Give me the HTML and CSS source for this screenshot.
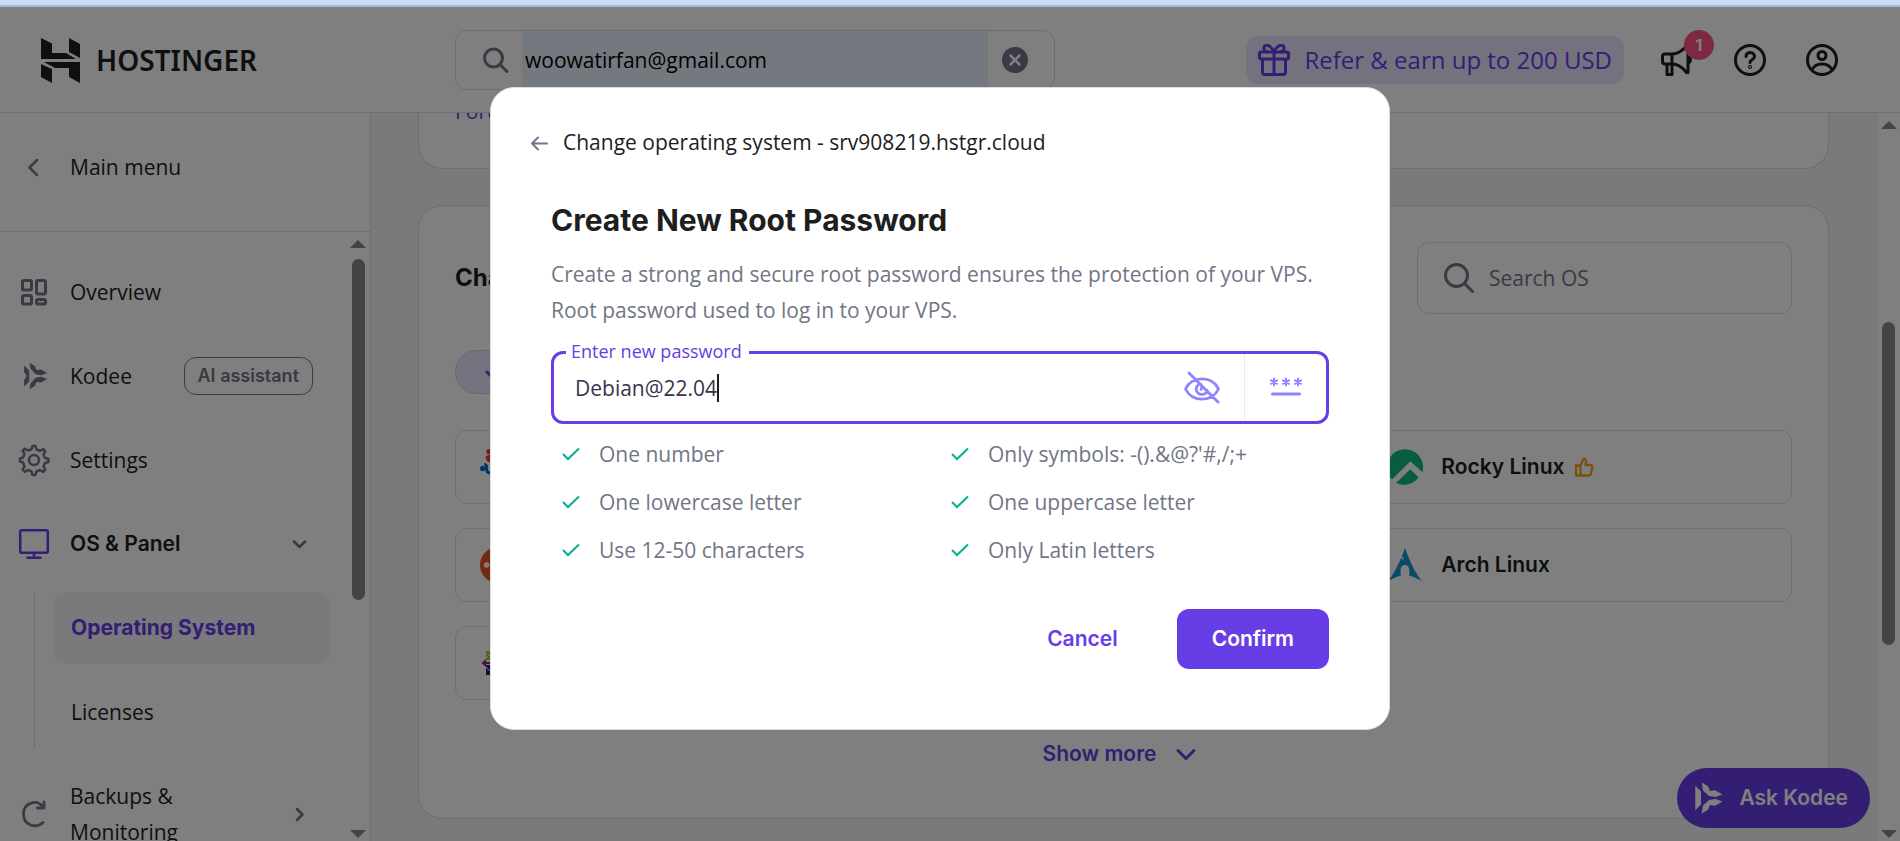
FILE: index.html
```html
<!DOCTYPE html>
<html lang="en">
<head>
<meta charset="utf-8">
<meta name="viewport" content="width=device-width, initial-scale=1">
<title>Operating System</title>
<link rel="stylesheet" href="styles.css">
</head>
<body>
<div class="strip"></div>
<div class="app">
  <header class="topbar">
    <a class="brand" href="#">
      <svg class="brand-mark" viewBox="0 0 39 45" fill="#1d1e20"><path d="M0 0l11 5.500V15h14l10 6H0zM28 0l11 6v14l-11-6zM3 24h36v21l-11-6v-9H14zM0 26l11 5v14L0 39z"/></svg>
      <span>HOSTINGER</span>
    </a>
    <div class="search">
      <svg class="i26" viewBox="0 0 26 26" fill="none" stroke="#727586" stroke-width="3" stroke-linecap="round"><circle cx="10.500" cy="11" r="9"/><path d="M17 17.500l7 7"/></svg>
      <input class="search-input" type="text" aria-label="Search" value="woowatirfan@gmail.com">
      <button class="plain" type="button" aria-label="Clear">
        <svg class="i26" viewBox="0 0 26 26"><circle cx="13" cy="13" r="13" fill="#727586"/><path d="M8.500 8.500l9 9M17.500 8.500l-9 9" stroke="#fff" stroke-width="2.500" stroke-linecap="round"/></svg>
      </button>
    </div>
    <div class="tools">
      <a class="refer" href="#">
        <svg class="i32" viewBox="0 0 32 32" fill="none" stroke="#673de6" stroke-width="3" stroke-linejoin="round"><rect x="1.500" y="8" width="29" height="7" rx="1.500"/><path d="M4.500 15v13q0 2.500 2.500 2.500h18q2.500 0 2.500-2.500V15M16 8v22M16 8C12-1 5 0 6 5q.5 3 4 3M16 8c4-9 11-8 10-3q-.5 3-4 3"/></svg>
        <span>Refer &amp; earn up to 200 USD</span>
      </a>
      <button class="plain bell" type="button" aria-label="News">
        <svg class="i36" viewBox="0 0 36 36" fill="none" stroke="#1d1e20" stroke-width="3" stroke-linejoin="round"><path d="M12 12H5q-2.500 0-2.500 2.500v5q0 2.500 2.500 2.500h7c6 0 11 4 14.500 8.500h1.500V4h-1.500C23 8 18 12 12 12zM12 12v10M7 22v10.500h5V22M28.500 14q4 3.500 0 7.500"/></svg>
        <span class="count">1</span>
      </button>
      <button class="plain" type="button" aria-label="Help">
        <svg class="i36" viewBox="0 0 36 36" fill="none" stroke="#1d1e20" stroke-width="3" stroke-linecap="round"><circle cx="18" cy="18" r="14.500"/><path d="M14 14.500c0-5.500 8.500-5 8.500 0 0 3.500-4.500 3-4.500 6"/><circle cx="18" cy="25" r=".6"/></svg>
      </button>
      <button class="plain" type="button" aria-label="Account">
        <svg class="i36" viewBox="0 0 36 36" fill="none" stroke="#1d1e20" stroke-width="3"><circle cx="18" cy="18" r="14.500"/><circle cx="18" cy="13.500" r="4"/><path d="M8 28c3.500-8 16.500-8 20 0"/></svg>
      </button>
    </div>
  </header>

  <div class="body">
    <aside class="sidebar">
      <a class="back" href="#">
        <svg class="i36" viewBox="0 0 36 36" fill="none" stroke="#727586" stroke-width="2.500" stroke-linecap="round" stroke-linejoin="round"><path d="M21 11l-7.500 7.500L21 26"/></svg>
        <span>Main menu</span>
      </a>
      <div class="nav-wrap">
        <nav class="nav">
          <a class="item" href="#">
            <svg class="i36" viewBox="0 0 36 36" fill="none" stroke="#727586" stroke-width="3"><rect x="6.500" y="6.500" width="9" height="9.500" rx="1.500"/><rect x="20.500" y="6.500" width="9" height="13.500" rx="1.500"/><rect x="6.500" y="21.500" width="9" height="8.500" rx="1.500"/><rect x="20.500" y="25.500" width="9" height="4.500" rx="1.500"/></svg>
            <span>Overview</span>
          </a>
          <a class="item" href="#">
            <svg class="i36" viewBox="-9 -5 42 42" fill="#727586"><path d="M.3 3.700l6.200 6V22.300l-6.200 6V21l3-5-3-5zM6.700.5L13 4.300l2 4.700 5-.7 7.500 4.200-7 2.500-6.500-1-6-6.500zM6.700 31.500l6.300-3.800 2-4.700 5 .7 7.500-4.200-7-2.500-6.500 1-6 6.500z"/></svg>
            <span>Kodee</span>
            <span class="tag">AI assistant</span>
          </a>
          <a class="item" href="#">
            <svg class="i36" viewBox="0 0 36 36" fill="none" stroke="#727586" stroke-width="2.500" stroke-linejoin="round"><circle cx="18" cy="18" r="5"/><path d="M15.500 7.500L16.500 4h3l1 3.500 3.500 1.500 3.200-1.800 2.100 2.100-1.800 3.200 1.500 3.500 3.500 1v3l-3.500 1-1.500 3.500 1.800 3.200-2.100 2.100-3.200-1.800-3.500 1.500-1 3.500h-3l-1-3.500-3.500-1.500-3.200 1.800-2.100-2.100 1.800-3.200L7 20.500l-3-1v-3l3-1L8.500 12 6.700 8.800l2.100-2.100L12 8.500z"/></svg>
            <span>Settings</span>
          </a>
          <a class="item open" href="#">
            <svg class="i36" viewBox="0 0 36 36" fill="none" stroke="#673de6" stroke-width="2.500" stroke-linecap="round"><rect x="4.200" y="4.200" width="27.600" height="22.600" rx="1.500"/><path d="M18 27v4.500M11.500 31.700h13"/></svg>
            <span>OS &amp; Panel</span>
            <svg class="i28 end" viewBox="0 0 28 28" fill="none" stroke="#727586" stroke-width="2.500" stroke-linecap="round" stroke-linejoin="round"><path d="M9 11.500l5.500 5.500 5.500-5.500"/></svg>
          </a>
          <div class="sub">
            <a class="subitem active" href="#">Operating System</a>
            <a class="subitem" href="#">Licenses</a>
          </div>
          <a class="item" href="#">
            <svg class="i36" viewBox="0 0 36 36" fill="none" stroke="#727586" stroke-width="2.800" stroke-linecap="round" stroke-linejoin="round"><path d="M27 26.500C20 33 7.500 29.500 7.500 18S21 2.500 27.500 11.500M28 6v6h-6.500"/></svg>
            <span class="wrap">Backups &amp; Monitoring</span>
            <svg class="i28 end" viewBox="0 0 28 28" fill="none" stroke="#727586" stroke-width="2.500" stroke-linecap="round" stroke-linejoin="round"><path d="M12 9l5.500 5.500L12 20"/></svg>
          </a>
        </nav>
        <div class="scroll side-scroll"><i class="up"></i><i class="thumb"></i><i class="down"></i></div>
      </div>
    </aside>

    <main class="main">
      <div class="content">
        <section class="card card-top"><a class="forum" href="#">Forum</a></section>
        <section class="card card-os">
          <div class="card-head">
            <h2>Change OS</h2>
            <div class="os-search">
              <svg class="i30" viewBox="0 0 30 30" fill="none" stroke="#727586" stroke-width="3" stroke-linecap="round"><circle cx="12.500" cy="12.500" r="11"/><path d="M20.500 20.500l8 8"/></svg>
              <input type="text" placeholder="Search OS" aria-label="Search OS">
            </div>
          </div>
          <button class="chip" type="button" aria-label="Filter"><svg class="i20" viewBox="0 0 20 20" fill="none" stroke="#673de6" stroke-width="3" stroke-linecap="round" stroke-linejoin="round"><path d="M3 10l4 4 9-9"/></svg></button>
          <div class="os-grid">
            <a class="os first" href="#"><svg class="i36" viewBox="0 0 36 36"><circle cx="2.700" cy="19.500" r="2.700" fill="#0069da"/><path d="M4 14q4 0 4 4v3q2 3 6 0l1 4q-5 2-9-1z" fill="#0069da"/><circle cx="9" cy="2.700" r="2.700" fill="#e73c4f"/><path d="M6 7q5-3 10 0v6H8q-3-3-2-6z" fill="#e73c4f"/></svg></a>
            <a class="os third" href="#"><svg class="i36" viewBox="0 0 36 36" fill="#10b981"><path d="M1.200 24.500A18 18 0 1 1 35.400 23L23.300 12.200 5 30.500a18 18 0 0 1-3.800-6zM9 34l14.300-13.800 8.200 8A18 18 0 0 1 9 34z"/></svg><span>Rocky Linux</span>
              <svg class="i20" viewBox="0 0 20 20" fill="none" stroke="#f5a014" stroke-width="2.300" stroke-linejoin="round"><path d="M6.500 8.500L9.500 2q3-.5 2.500 2.500L11.500 8H16q2.500 0 2.300 2.500l-1.300 6q-.5 2-2.500 2h-8zM6.500 8.500H2v10h4.500z"/></svg></a>
            <a class="os first" href="#"><svg class="i36" viewBox="0 0 36 36"><circle cx="18" cy="18" r="18" fill="#e95420"/><circle cx="6.500" cy="18" r="2.700" fill="#fff"/><circle cx="19" cy="18" r="8" fill="none" stroke="#fff" stroke-width="3"/></svg></a>
            <a class="os third" href="#"><svg class="i36" viewBox="0 0 36 36" fill="#1793d1"><path d="M18 1c4 11 8 21 16.500 33-4-2.700-8.200-4.300-12.300-5.300 1-9-1.500-10.700-4.200-10.700s-5.200 1.700-4.200 10.700C9.700 29.700 5.500 31.300 1.500 34 8 24.500 11 18.500 14 11l3 2.500-2-4.500z"/></svg><span>Arch Linux</span></a>
            <a class="os first" href="#"><svg class="i36" viewBox="0 0 36 36"><path d="M1.500 18l4.500-4v3h10v2H6v3z" fill="#932279"/><path d="M6 6h12v9H6z" fill="#9ccd2a"/><path d="M6 20h12v10H6z" fill="#262577"/><path d="M6 13l3.500-3.500L13 13M6 22l3.500 3.500L13 22" fill="none" stroke="#fff"/></svg></a>
          </div>
          <a class="more" href="#"><span>Show more</span><svg class="i36" viewBox="0 0 36 36" fill="none" stroke="#673de6" stroke-width="3" stroke-linecap="round" stroke-linejoin="round"><path d="M10 14.500l8 8 8-8"/></svg></a>
        </section>
      </div>
      <div class="scroll main-scroll"><i class="up"></i><i class="thumb"></i><i class="down"></i></div>
    </main>
  </div>

  <button class="ask" type="button">
    <svg class="i32" viewBox="0 0 32 32" fill="#fff"><path d="M.3 3.700l5.700 5.800V22.500l-5.700 5.800zM6.700.5L13 4.300l2 4.700 5-.7 7.500 4.200-7 2.500-6.500-1-6-5.500zM6.700 31.500l6.300-3.800 2-4.700 5 .7 7.500-4.200-7-2.500-6.500 1-6 5.500z"/></svg>
    <span>Ask Kodee</span>
  </button>

  <div class="overlay">
    <form class="modal" role="dialog" aria-labelledby="dlg-title">
      <div class="modal-head">
        <button class="plain" type="button" aria-label="Back"><svg class="i20" viewBox="0 0 20 20" fill="none" stroke="#727586" stroke-width="2" stroke-linecap="round" stroke-linejoin="round"><path d="M17 11.500H2M8 5.500l-6 6 6 6"/></svg></button>
        <span>Change operating system - srv908219.hstgr.cloud</span>
      </div>
      <div class="modal-body">
        <h1 id="dlg-title">Create New Root Password</h1>
        <p>Create a strong and secure root password ensures the protection of your VPS. Root password used to log in to your VPS.</p>
        <div class="field">
          <label for="pw">Enter new password</label>
          <div class="value"><input id="pw" type="text" value="Debian@22.04"><i class="caret"></i></div>
          <button class="plain eye" type="button" aria-label="Show password">
            <svg class="i36" viewBox="0 0 36 36" fill="none" stroke="#8c85ff" stroke-width="2.800" stroke-linecap="round"><path d="M1.500 19C8 5.500 28 5.500 34.500 19 28 32.500 8 32.500 1.500 19zM5 3l29 29M15 14c-6 5-1 12 5 10 2-.5 3-2 3-3.500M17 14.500q1.500 3 0 5"/></svg>
          </button>
          <button class="plain gen" type="button" aria-label="Generate password">
            <svg class="i36" viewBox="0 0 36 36" fill="none" stroke="#8c85ff" stroke-width="2" stroke-linecap="round"><path d="M6 8.500v7M3 10.300l6 3.500M9 10.300l-6 3.500M18 8.500v7M15 10.300l6 3.500M21 10.300l-6 3.500M30 8.500v7M27 10.300l6 3.500M33 10.300l-6 3.500"/><path d="M4.500 24h27" stroke-width="3.200"/></svg>
          </button>
        </div>
        <ul class="rules">
          <li><svg class="i20" viewBox="0 0 20 20"><path d="M2 10l5 5L18 4.500"/></svg>One number</li>
          <li><svg class="i20" viewBox="0 0 20 20"><path d="M2 10l5 5L18 4.500"/></svg>Only symbols: -().&amp;@?'#,/;+</li>
          <li><svg class="i20" viewBox="0 0 20 20"><path d="M2 10l5 5L18 4.500"/></svg>One lowercase letter</li>
          <li><svg class="i20" viewBox="0 0 20 20"><path d="M2 10l5 5L18 4.500"/></svg>One uppercase letter</li>
          <li><svg class="i20" viewBox="0 0 20 20"><path d="M2 10l5 5L18 4.500"/></svg>Use 12-50 characters</li>
          <li><svg class="i20" viewBox="0 0 20 20"><path d="M2 10l5 5L18 4.500"/></svg>Only Latin letters</li>
        </ul>
        <div class="actions">
          <button class="btn" type="button">Cancel</button>
          <button class="btn primary" type="button">Confirm</button>
        </div>
      </div>
    </form>
  </div>
</div>
</body>
</html>
```
FILE: styles.css
```css
* { box-sizing: border-box; }

:root {
  --ink: #1d1e20;
  --gray: #727586;
  --line: #dadce0;
  --brand: #673de6;
  --strong: "Inter", "Liberation Sans", sans-serif;
}

body {
  margin: 0;
  height: 100vh;
  display: flex;
  flex-direction: column;
  overflow: hidden;
  font: 400 21px/36px "Open Sans", "Liberation Sans", sans-serif;
  color: var(--ink);
  background: #fff;
}

a { color: inherit; text-decoration: none; }
h1, h2, p, ul { margin: 0; padding: 0; }
input, button { font: inherit; color: inherit; }
input { border: 0; outline: 0; background: none; min-width: 0; padding: 0; }
svg { display: block; flex: none; }

.plain { border: 0; background: none; padding: 0; display: block; }
.i20 { width: 20px; height: 20px; }
.i26 { width: 26px; height: 26px; }
.i28 { width: 28px; height: 28px; }
.i30 { width: 30px; height: 30px; }
.i32 { width: 32px; height: 32px; }
.i36 { width: 36px; height: 36px; }

.strip { flex: none; height: 7px; background: #cbdcf7; border-bottom: 2px solid #a9bbd9; }
.app { position: relative; flex: 1; min-height: 0; display: flex; flex-direction: column; }

/* Top bar */
.topbar {
  flex: none;
  display: flex;
  align-items: center;
  padding: 23px 60px 22px 41px;
  border-bottom: 1px solid var(--line);
}
.brand { flex: 0 0 414px; display: flex; align-items: center; gap: 16px; font: 600 28px/36px "Noto Sans", sans-serif; }
.brand-mark { width: 39px; height: 45px; }
.search {
  flex: 0 1 600px;
  display: flex;
  align-items: center;
  padding: 0 26px 0 27px;
  border: 1px solid var(--line);
  border-radius: 12px;
}
.search-input { flex: 1; height: 58px; margin: 0 14px 0 13px; padding: 0 3px; background: #e8f0fe; color: #000; }
.tools { margin-left: auto; display: flex; align-items: center; gap: 36px; }
.refer {
  display: flex;
  align-items: center;
  gap: 14px;
  padding: 6px 12px;
  border-radius: 12px;
  background: #ebe4ff;
  color: var(--brand);
  font-size: 24px;
}
.bell { position: relative; }
.count {
  position: absolute;
  top: -12px;
  right: -18px;
  width: 30px;
  height: 30px;
  border-radius: 50%;
  background: #fc5185;
  color: #fff;
  font: 700 16px/30px var(--strong);
  text-align: center;
}

.body { flex: 1; min-height: 0; display: flex; }

/* Sidebar */
.sidebar { flex: 0 0 371px; display: flex; flex-direction: column; border-right: 1px solid var(--line); }
.back {
  flex: none;
  display: flex;
  align-items: center;
  gap: 18px;
  padding: 36px 16px 46px;
  border-bottom: 1px solid var(--line);
}
.nav-wrap { flex: 1; min-height: 0; display: flex; overflow: hidden; }
.nav { flex: 1; display: flex; flex-direction: column; gap: 12px; padding: 24px 16px; }
.item { flex: none; display: flex; align-items: center; gap: 18px; padding: 18px 17px 18px 0; }
.open { font-family: var(--strong); font-weight: 600; }
.end { margin-left: auto; }
.tag {
  margin: -1px 0 -1px auto;
  padding: 0 13px;
  border: 1px solid var(--gray);
  border-radius: 12px;
  color: var(--gray);
  font: 600 18px/36px var(--strong);
}
.wrap { width: 130px; }
.sub { flex: none; display: flex; flex-direction: column; gap: 12px; margin-left: 18px; padding-left: 18px; border-left: 1px solid var(--line); }
.subitem { padding: 18px; border-radius: 12px; }
.active { background: #f4f4fb; color: var(--brand); font-family: var(--strong); font-weight: 700; }

/* Drawn scroll bars */
.scroll { flex: none; display: flex; flex-direction: column; align-items: center; padding: 8px 0 3px; background: #fff; }
.up, .down { border: 8px solid transparent; }
.up { border-top: 0; border-bottom-color: #888; }
.down { border-bottom: 0; border-top-color: #888; margin-top: auto; }
.thumb { width: 13px; border-radius: 7px; background: #888; }
.side-scroll { width: 24px; }
.side-scroll .thumb { margin-top: 11px; height: 57%; }
.main-scroll { width: 23px; }
.main-scroll .thumb { margin-top: 193px; height: 45%; }

/* Main column */
.main { flex: 1; min-width: 0; display: flex; background: #f4f4fb; overflow: hidden; }
.content { flex: 1; min-width: 0; display: flex; flex-direction: column; gap: 36px; padding: 0 48px 0 47px; }
.card { flex: none; background: #fff; border: 1px solid var(--line); border-radius: 24px; padding: 36px; }
.card-top { border-top: 0; border-radius: 0 0 24px 24px; padding: 0 36px 40px; overflow: hidden; }
.forum { display: block; margin-top: -20px; margin-bottom: -1px; color: var(--brand); }
.card-os { padding-bottom: 40px; }
.card-head { display: flex; align-items: center; justify-content: space-between; }
h2 { font: 700 24px/36px var(--strong); }
.os-search {
  flex: 0 1 375px;
  display: flex;
  align-items: center;
  gap: 15px;
  padding: 0 26px;
  border: 1px solid var(--line);
  border-radius: 12px;
}
.os-search input { flex: 1; height: 70px; }
.os-search input::placeholder { color: var(--gray); opacity: 1; }
.chip { display: flex; align-items: center; margin: 36px 0; height: 44px; padding: 0 28px; border: 1px solid #d5cfe8; border-radius: 22px; background: #ebe4ff; }
.os-grid { display: grid; grid-template-columns: repeat(3, 1fr); gap: 24px; }
.os {
  display: flex;
  align-items: center;
  gap: 18px;
  padding: 18px 24px;
  border: 1px solid var(--line);
  border-radius: 12px;
  font-family: var(--strong);
  font-weight: 600;
}
.os .i20 { margin-left: -9px; }
.first { grid-column: 1; }
.third { grid-column: 3; }
.more { display: flex; align-items: center; justify-content: center; gap: 12px; margin-top: 30px; padding: 6px 0; color: var(--brand); font-family: var(--strong); font-weight: 600; }

.ask {
  position: absolute;
  right: 30px;
  bottom: 13px;
  display: flex;
  align-items: center;
  gap: 12px;
  padding: 12px 22px 12px 18px;
  border: 0;
  border-radius: 30px;
  background: var(--brand);
  color: #fff;
  font-family: var(--strong);
  font-weight: 600;
}

/* Dialog */
.overlay {
  position: absolute;
  inset: 0;
  display: flex;
  align-items: flex-start;
  justify-content: center;
  padding: 80px 20px 0 0;
  background: rgba(0, 0, 0, .5);
}
.modal { width: min(900px, 100%); padding: 36px 0 60px; border: 1px solid var(--line); border-radius: 24px; background: #fff; }
.modal-head { display: flex; align-items: center; gap: 13px; padding: 0 39px; }
.modal-body { padding: 38px 60px 0; }
h1 { font: 700 30px/44px var(--strong); }
p { margin: 14px 0 23px; color: var(--gray); }
.field { position: relative; display: flex; border: 3px solid var(--brand); border-radius: 12px; }
.field label {
  position: absolute;
  top: -15px;
  left: 12px;
  padding: 0 7px 0 5px;
  background: #fff;
  color: var(--brand);
  font-size: 18px;
  line-height: 24px;
}
.value { position: relative; flex: 1; }
.value input { width: 100%; height: 67px; padding-left: 21px; color: #36344d; }
.caret { position: absolute; left: 163px; top: 20px; width: 2px; height: 28px; background: var(--ink); }
.eye { padding: 0 24px; }
.gen { padding: 0 22px 0 23px; border-left: 1px solid #ebebf2; }
.rules { display: grid; grid-template-columns: 1fr 1fr; margin-top: 6px; list-style: none; color: var(--gray); }
.rules li { display: flex; align-items: center; gap: 18px; padding: 6px 10px; }
.rules path { fill: none; stroke: #00b090; stroke-width: 2; }
.actions { display: flex; justify-content: flex-end; gap: 24px; margin-top: 35px; }
.btn { padding: 12px 35px; border: 0; border-radius: 12px; background: none; color: var(--brand); font-family: var(--strong); font-weight: 600; }
.primary { background: var(--brand); color: #fff; }
```
